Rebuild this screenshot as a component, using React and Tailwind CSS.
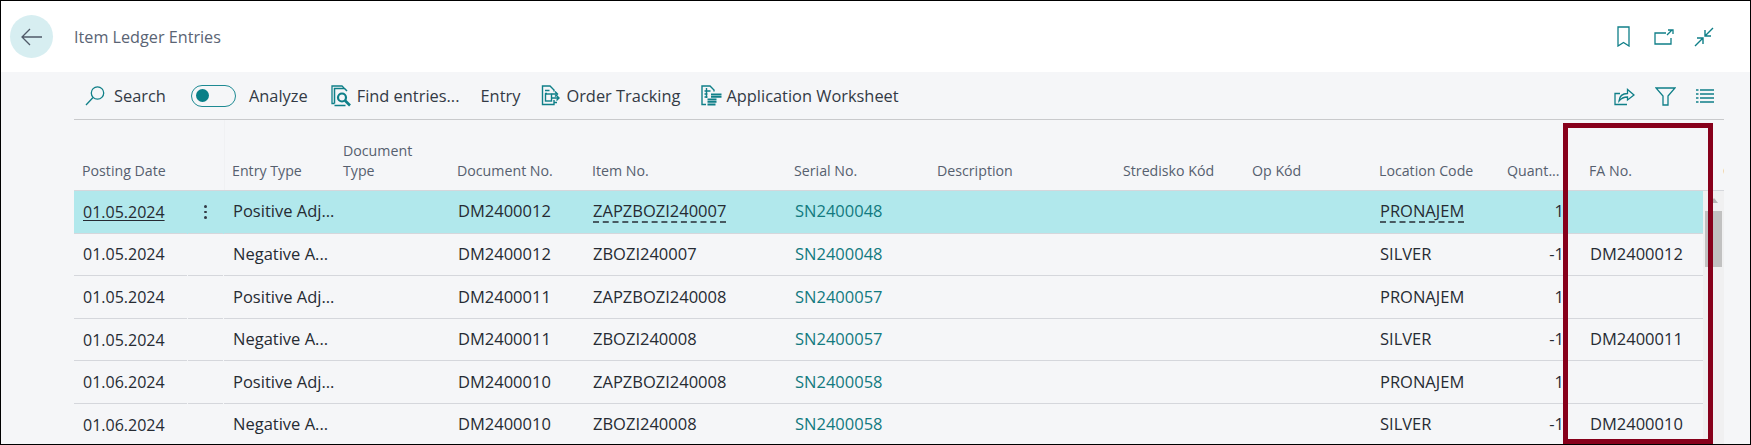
const TEAL = "#0f7f88";

const columns = [
  { key: "date", w: "w-[114px]", head: "Posting Date" },
  { key: "menu", w: "w-[36px]", head: "" },
  { key: "type", w: "w-[111px]", head: "Entry Type" },
  { key: "docType", w: "w-[114px]", head: "Document Type" },
  { key: "docNo", w: "w-[135px]", head: "Document No." },
  { key: "item", w: "w-[202px]", head: "Item No." },
  { key: "serial", w: "w-[143px]", head: "Serial No." },
  { key: "desc", w: "w-[186px]", head: "Description" },
  { key: "center", w: "w-[129px]", head: "Stredisko Kód" },
  { key: "op", w: "w-[127px]", head: "Op Kód" },
  { key: "loc", w: "w-[128px]", head: "Location Code" },
  { key: "qty", w: "w-[74px]", head: "Quant..." },
  { key: "fa", w: "w-[132px]", head: "FA No." },
];

const rows = [
  { date: "01.05.2024", type: "Positive Adj...", docNo: "DM2400012", item: "ZAPZBOZI240007", serial: "SN2400048", loc: "PRONAJEM", qty: "1", fa: "", selected: true },
  { date: "01.05.2024", type: "Negative A...", docNo: "DM2400012", item: "ZBOZI240007", serial: "SN2400048", loc: "SILVER", qty: "-1", fa: "DM2400012" },
  { date: "01.05.2024", type: "Positive Adj...", docNo: "DM2400011", item: "ZAPZBOZI240008", serial: "SN2400057", loc: "PRONAJEM", qty: "1", fa: "" },
  { date: "01.05.2024", type: "Negative A...", docNo: "DM2400011", item: "ZBOZI240008", serial: "SN2400057", loc: "SILVER", qty: "-1", fa: "DM2400011" },
  { date: "01.06.2024", type: "Positive Adj...", docNo: "DM2400010", item: "ZAPZBOZI240008", serial: "SN2400058", loc: "PRONAJEM", qty: "1", fa: "" },
  { date: "01.06.2024", type: "Negative A...", docNo: "DM2400010", item: "ZBOZI240008", serial: "SN2400058", loc: "SILVER", qty: "-1", fa: "DM2400010" },
];

function SearchIcon() {
  return (
    <svg width="22" height="22" viewBox="0 0 22 22" fill="none" stroke={TEAL} strokeWidth="1.3">
      <circle cx="13.5" cy="8" r="6.2" />
      <path d="M9 12.5 2 20" />
    </svg>
  );
}

function FindIcon() {
  return (
    <svg width="21" height="22" viewBox="0 0 21 22" fill="none" stroke={TEAL}>
      <path d="M3.5 18.5H1V1h10l2 2" strokeWidth="1.3" />
      <path d="M3.5 18.5V3.5h10L16 6M3.5 20.500h11" strokeWidth="1.5" />
      <circle cx="11" cy="12.5" r="4" strokeWidth="2.2" />
      <path d="m14 15.5 5 5" strokeWidth="2.6" />
    </svg>
  );
}

function TrackIcon() {
  return (
    <svg width="20" height="21" viewBox="0 0 20 21" fill="none" stroke={TEAL} strokeWidth="1.4">
      <path d="M13 15v4.5H1.500V1H9l4 4v1.500" />
      <path d="M4 5.500h4.500M4 8.500h2" />
      <rect x="4.5" y="9" width="6" height="7" />
      <path d="M10.500 9h5M14 6.500 16.500 9 14 11.500M10.500 13h7M15.500 10.500 18 13l-2.500 2.500M13 17.500h3" />
    </svg>
  );
}

function WorksheetIcon() {
  return (
    <svg width="21" height="21" viewBox="0 0 21 21" fill="none" stroke={TEAL} strokeWidth="1.4">
      <path d="M5 19.500H1V1h8l4 4v1.500" />
      <path d="M3.500 6h6M3.500 9h3M3.500 12h3M5.500 3v10" />
      <path d="M10 9.500h10.500M10 11.800h10.500" strokeWidth="1.8" />
      <path d="M6.500 14.500h9M6.500 16.800h9M6.500 19.500h8" strokeWidth="1.8" />
    </svg>
  );
}

function Toolbar() {
  return (
    <div className="flex h-[48px] items-center justify-between border-b border-[#c9cacc] pt-[1px] text-[16.4px] text-[#333a45]">
      <div className="flex items-center">
        <span className="ml-[10px] mr-[8px] flex"><SearchIcon /></span>
        <span>Search</span>
        <span className="ml-[25px] mr-[13px] flex h-[22px] w-[45px] items-center rounded-full border border-[#1d8a93] pl-[4px]">
          <span className="h-[13px] w-[13px] rounded-full bg-[#087f87]" />
        </span>
        <span>Analyze</span>
        <span className="ml-[23px] mr-[5px] flex"><FindIcon /></span>
        <span>Find entries...</span>
        <span className="ml-[21px]">Entry</span>
        <span className="ml-[21px] mr-[5px] flex"><TrackIcon /></span>
        <span>Order Tracking</span>
        <span className="ml-[21px] mr-[4px] flex"><WorksheetIcon /></span>
        <span>Application Worksheet</span>
      </div>
      <div className="mr-[10px] flex items-center gap-[20px]">
        <svg width="21" height="20" viewBox="0 0 21 20" fill="none" stroke={TEAL} strokeWidth="1.3">
          <path d="M13 18.500H1V7.500h5" />
          <path d="M5 15c.5-5 4-7.500 8.500-7.500V3.500l6.500 5.500-6.500 5V11C10 11 7 12.500 5 15Z" />
        </svg>
        <svg width="21" height="19" viewBox="0 0 21 19" fill="none" stroke={TEAL} strokeWidth="1.3">
          <path d="M1 1h19l-7 8v9H8V9Z" />
        </svg>
        <svg width="18" height="14" viewBox="0 0 18 14" stroke={TEAL} strokeWidth="1.3">
          <path d="M0 1h2.500M4 1h14M0 5h2.500M4 5h14M0 9h2.500M4 9h14M0 13h2.500M4 13h14" />
        </svg>
      </div>
    </div>
  );
}

function headPadding(key) {
  if (key === "type") return "border-l border-[#f0f1f3] pl-[7px]";
  if (key === "fa") return "pl-[16px]";
  return "pl-[8px]";
}

function HeadRow() {
  return (
    <div className="flex h-[71px] items-end overflow-hidden border-b border-[#d5d7dc] text-[14.2px] leading-[20px] text-[#56606f]">
      {columns.map((col) => (
        <div key={col.key} className={`${col.w} flex h-full shrink-0 items-end pb-[9px] ${headPadding(col.key)}`}>
          <span className={col.key === "docType" ? "w-[80px]" : "whitespace-nowrap"}>{col.head}</span>
        </div>
      ))}
      <span className="shrink-0 pb-[9px] pl-[18px]">Cost</span>
    </div>
  );
}

function DataRow({ row }) {
  const cell = "flex h-full shrink-0 items-center border-b border-[#d5d7dc]";
  const dashed = row.selected ? "underline decoration-dashed underline-offset-4" : "";
  return (
    <div className={`flex h-[42.6px] shrink-0 text-[16.5px] text-[#262b33] ${row.selected ? "bg-[#b1e8ec]" : ""}`}>
      <div className={`${cell} mr-px w-[113px] pl-[9px] text-[16px]`}>
        <span className={row.selected ? "underline underline-offset-2" : ""}>{row.date}</span>
      </div>
      <div className={`${cell} mr-px w-[35px] flex-col justify-center gap-[3px]`}>
        {row.selected && (
          <>
            <span className="h-[2.5px] w-[2.5px] rounded-full bg-[#333a45]" />
            <span className="h-[2.5px] w-[2.5px] rounded-full bg-[#333a45]" />
            <span className="h-[2.5px] w-[2.5px] rounded-full bg-[#333a45]" />
          </>
        )}
      </div>
      <div className={`${cell} w-[111px] pl-[9px]`}>{row.type}</div>
      <div className={`${cell} w-[114px]`} />
      <div className={`${cell} w-[135px] pl-[9px]`}>{row.docNo}</div>
      <div className={`${cell} w-[202px] pl-[9px]`}>
        <span className={dashed}>{row.item}</span>
      </div>
      <div className={`${cell} w-[143px] pl-[9px] text-[#127a80]`}>{row.serial}</div>
      <div className={`${cell} w-[186px]`} />
      <div className={`${cell} w-[129px]`} />
      <div className={`${cell} w-[127px]`} />
      <div className={`${cell} w-[128px] pl-[9px]`}>
        <span className={dashed}>{row.loc}</span>
      </div>
      <div className={`${cell} w-[65px] justify-end`}>{row.qty}</div>
      <div className={`${cell} w-[139px] pl-[26px]`}>{row.fa}</div>
    </div>
  );
}

export default function App() {
  return (
    <div
      className="relative flex h-[445px] w-[1751px] flex-col overflow-hidden border border-black bg-[#f5f6f8]"
      style={{ fontFamily: '"Open Sans", sans-serif' }}
    >
      {/* page title bar */}
      <div className="flex h-[71px] shrink-0 items-center bg-white pl-[9px] pr-[36px]">
        <div className="flex h-[43px] w-[43px] items-center justify-center rounded-full bg-[#d7eef1]">
          <svg width="22" height="18" viewBox="0 0 22 18" fill="none" stroke="#505a68" strokeWidth="1.3">
            <path d="M21 9H1M9 1 1 9l8 8" />
          </svg>
        </div>
        <span className="ml-[21px] mt-[2px] text-[16.2px] text-[#5a6474]">Item Ledger Entries</span>
        <div className="ml-auto flex items-center">
          <svg width="13" height="21" viewBox="0 0 13 21" fill="none" stroke={TEAL} strokeWidth="1.3">
            <path d="M1 1h11v19l-5.500-3.500L1 20Z" />
          </svg>
          <svg className="ml-[24px]" width="20" height="16" viewBox="0 0 20 16" fill="none" stroke={TEAL} strokeWidth="1.3">
            <path d="M12 4H1v11h16V9M13 6l5-5M14 1h5v4" />
          </svg>
          <svg className="ml-[20px]" width="20" height="20" viewBox="0 0 20 20" fill="none" stroke={TEAL} strokeWidth="1.4">
            <path d="M1 19 9 11M3 11h6v6M19 1l-8 8M11 3v6h6" />
          </svg>
        </div>
      </div>

      {/* content */}
      <div className="flex min-h-0 flex-1 flex-col pl-[73px] pr-[26px]">
        <Toolbar />
        <HeadRow />
        <div className="flex min-h-0 flex-1">
          <div className="flex w-[1629px] flex-col overflow-hidden">
            {rows.map((row, i) => (
              <DataRow key={i} row={row} />
            ))}
          </div>
          {/* scrollbar */}
          <div className="flex w-[21px] flex-col items-center bg-[#f0f0f1] pt-[7px]">
            <span className="h-0 w-0 border-x-[4px] border-b-[5px] border-x-transparent border-b-[#b5b5b5]" />
            <span className="mt-[8px] h-[56px] w-[17px] bg-[#c1c1c1]" />
          </div>
        </div>
      </div>

      {/* highlight around the FA No. column */}
      <div className="absolute left-[1562px] top-[122px] h-[321px] w-[150px] border-[5px] border-[#87001b]" />
    </div>
  );
}
